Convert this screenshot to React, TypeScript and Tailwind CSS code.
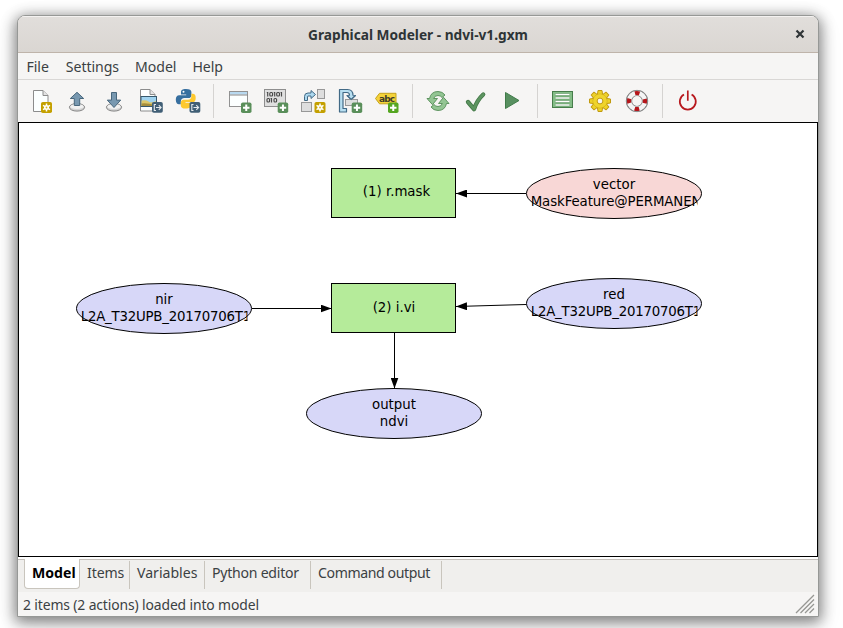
import type { ReactNode } from "react";

const uiFont = "font-['Noto_Sans',sans-serif]";

type BadgeProps = { x: number; y: number };

function PlusBadge({ x, y, color = "#5a8f5a" }: BadgeProps & { color?: string }) {
  return (
    <g transform={`translate(${x} ${y})`}>
      <rect width="10.5" height="10.5" rx="1.8" fill={color} />
      <path d="M5.25 2v6.5M2 5.25h6.5" stroke="#fff" strokeWidth="2" />
    </g>
  );
}

function StarBadge({ x, y }: BadgeProps) {
  return (
    <g transform={`translate(${x} ${y})`}>
      <rect width="11" height="11" rx="1.8" fill="#c4a000" />
      <path d="M5.5 1.5v8M2 3.4l7 4.2M9 3.4l-7 4.2" stroke="#fff" strokeWidth="1.5" />
      <circle cx="5.5" cy="5.5" r="2.5" fill="#fff" />
      <circle cx="5.5" cy="5.5" r="0.9" fill="#d9b928" />
    </g>
  );
}

function ExportBadge({ x, y }: BadgeProps) {
  return (
    <g transform={`translate(${x} ${y})`}>
      <rect width="10.8" height="10.8" rx="1.8" fill="#415f76" />
      <path d="M4 2.5H2.3v6H4M4 5.5h5M6.8 3.2l2.3 2.3-2.3 2.3" stroke="#e4eaee" strokeWidth="1.1" fill="none" />
    </g>
  );
}

function Disc({ cx }: { cx: number }) {
  return (
    <g>
      <ellipse cx={cx} cy="107.3" rx="7.6" ry="3.8" fill="#d4d4d4" stroke="#858585" />
      <ellipse cx={cx} cy="106.4" rx="6.6" ry="2.5" fill="#f1f1f1" />
    </g>
  );
}

function Tool({ x, label, children }: { x: number; label: string; children: ReactNode }) {
  return (
    <button type="button" aria-label={label} className="h-[42px] w-[37px] shrink-0">
      <svg className="block overflow-visible" width="37" height="42" viewBox={`${x} 80 37 42`} fill="none">
        {children}
      </svg>
    </button>
  );
}

function Separator({ className }: { className: string }) {
  return <div className={`h-[34px] w-px shrink-0 bg-[#d5d3d1] ${className}`} />;
}

const gearTeeth = [0, 45, 90, 135, 180, 225, 270, 315];

function Toolbar() {
  return (
    <div className="flex h-[42px] items-center pl-[5px]">
      <Tool x={23} label="New">
        <path d="M33.5 90.5H43l5 5v16H33.5z" fill="#fcffff" stroke="#8c8c8c" />
        <path d="M43 90.5v5h5" fill="#e4e4e4" stroke="#8c8c8c" />
        <StarBadge x={41} y={102} />
      </Tool>
      <Tool x={60} label="Open">
        <Disc cx={77} />
        <path d="M77 92.3l6.7 6.2h-4v7h-5.4v-7h-4z" fill="#7898b0" stroke="#48677d" />
      </Tool>
      <Tool x={97} label="Save">
        <Disc cx={114} />
        <path d="M111.5 92.5h5v7.6h4.2L114 107.5l-6.7-7.4h4.2z" fill="#7898b0" stroke="#48677d" />
      </Tool>
      <Tool x={134} label="Export image">
        <path d="M140.5 89.5H150l5 5V111h-14.5z" fill="#fcffff" stroke="#8c8c8c" />
        <path d="M150 89.5v5h5" fill="#e4e4e4" stroke="#8c8c8c" />
        <rect x="141" y="96.5" width="15.5" height="10" fill="#9fd3f0" stroke="#36586d" />
        <path d="M141.5 100.5q4.5-1 7 1t7.5-.5v5h-14.5z" fill="#dcc76a" />
        <path d="M141.5 103.5q5-1 14.5 2v.5h-14.5z" fill="#a58e3d" />
        <ExportBadge x={152} y={102} />
      </Tool>
      <Tool x={171} label="Export Python">
        <path d="M186 89c-4 0-5 1.4-5 3.1v2.3h5.2v.9h-7c-2.2 0-3.4 1.8-3.4 4.4 0 2.7 1.1 4.5 3.2 4.5h1.8v-2.7c0-2 1.6-3.4 3.5-3.4h4.2c1.7 0 2.9-1.3 2.9-2.9v-3.1c0-2-1.7-3.1-5.4-3.1z" fill="#376f9f" />
        <path d="M185.7 108.5c4 0 5-1.4 5-3.1v-2.3h-5.2v-.9h7c2.2 0 3.2-1.7 3.2-4.3 0-2.7-1-4.1-3-4.1h-1.3v2.6c0 2-1.6 3.3-3.5 3.3h-4.2c-1.6 0-2.9 1.2-2.9 2.9v2.8c0 2 1.5 3.1 4.9 3.1z" fill="#fec92f" />
        <circle cx="183.5" cy="91.7" r="1" fill="#fff" />
        <ExportBadge x={189.5} y={102} />
      </Tool>
      <Separator className="ml-[5px] mr-[7px]" />
      <Tool x={221} label="Add command">
        <rect x="229.5" y="91.5" width="18" height="15" fill="#fcffff" stroke="#929292" />
        <path d="M230 93.3h17" stroke="#b8d9f0" strokeWidth="2.6" />
        <path d="M229.5 95h18" stroke="#858585" />
        <PlusBadge x={241} y={102.5} />
      </Tool>
      <Tool x={258} label="Add data">
        <rect x="264.5" y="89.5" width="21" height="17" fill="#dfdfdf" stroke="#8e8e8e" />
        <g stroke="#4a4a4a" strokeWidth="1.15">
          <path d="M267.7 92v4.5M274.7 92v4.5M281.5 92v4.5M271.5 98v4.5M266.8 92.5h1M273.8 92.5h1M280.6 92.5h1M270.6 98.5h1" />
          <rect x="269.8" y="92.5" width="2.8" height="3.5" rx="1" />
          <rect x="276.7" y="92.5" width="2.8" height="3.5" rx="1" />
          <rect x="267" y="98.5" width="2.6" height="3.5" rx="1" />
          <rect x="274" y="98.5" width="2.6" height="3.5" rx="1" />
        </g>
        <PlusBadge x={277.7} y={102.5} />
      </Tool>
      <Tool x={295} label="Add relation">
        <rect x="301.5" y="102.5" width="10" height="9" fill="#dedede" stroke="#989898" />
        <rect x="317.5" y="89.5" width="7" height="9" fill="#dedede" stroke="#989898" />
        <path d="M304.5 100.5v-4q0-3.500 3.500-3.500h3v-2.500l4.500 4-4.500 4V96h-3q-.5 0-.5 1v3.500z" fill="#add9f0" stroke="#426a86" strokeLinejoin="round" />
        <StarBadge x={314.5} y={102} />
      </Tool>
      <Tool x={332} label="Add loop">
        <path d="M339.5 89.5h8q5.500 0 5.500 6h2.500l-4.300 4-4.200-4h2.500q0-3-2.500-3h-4v16h3.500v3.500h-7z" fill="#b8dff1" stroke="#426a86" strokeWidth="1.2" strokeLinejoin="round" />
        <rect x="345.5" y="99.5" width="12" height="6" fill="#dedede" stroke="#989898" />
        <path d="M347.500 95.700l3.700 3.800 3.800-3.800" fill="#b8dff1" stroke="#426a86" strokeWidth="1.2" />
        <PlusBadge x={351.7} y={102.5} />
      </Tool>
      <Tool x={369} label="Add label">
        <path d="M375.5 98.5l4-5.2H396v10.500h-16.500z" fill="#f4d33a" stroke="#c5a21a" />
        <text x="379" y="102" className="font-['DejaVu_Sans'] text-[9px] font-bold" fill="#403c28" textLength="16">abc</text>
        <PlusBadge x={388} y={102.5} color="#55a621" />
      </Tool>
      <Separator className="ml-[6px] mr-[7px]" />
      <Tool x={420} label="Redraw">
        <g stroke="#548c56" strokeWidth=".9" strokeLinejoin="round" fill="#93c593">
          <path d="M427 98.5h2.5q1.500-7 8.500-7 4.500 0 7 3.500l-3 2.500q-1.500-2-4-2-3.500 0-4.300 3h3.800l-5 6.200z" />
          <path d="M427 98.5h2.5q1.500-7 8.500-7 4.500 0 7 3.500l-3 2.500q-1.500-2-4-2-3.500 0-4.300 3h3.800l-5 6.200z" transform="rotate(180 438 101)" />
        </g>
      </Tool>
      <Tool x={457} label="Validate">
        <path d="M468 102l6 7.2q3-9 9.2-14.7" stroke="#437847" strokeWidth="4.3" strokeLinecap="round" strokeLinejoin="round" />
        <path d="M468 102l6 7.2q3-9 9.2-14.7" stroke="#5d9460" strokeWidth="2.7" strokeLinecap="round" strokeLinejoin="round" />
      </Tool>
      <Tool x={494} label="Run">
        <path d="M505.5 92.5L519 100.5l-13.5 8z" fill="#589060" stroke="#407b49" strokeLinejoin="round" />
      </Tool>
      <Separator className="ml-[6px] mr-[6px]" />
      <Tool x={544} label="Variables">
        <rect x="552.5" y="91.5" width="20" height="16" fill="#83bd86" stroke="#477d4b" />
        <path d="M555.5 94.5h14M555.5 98h14M555.5 101.5h14M555.5 105h14" stroke="#568b59" strokeWidth="2.5" />
        <path d="M555.5 94.5h14M555.5 98h14M555.5 101.5h14M555.5 105h14" stroke="#fff" strokeWidth="1.3" />
      </Tool>
      <Tool x={581} label="Preferences">
        {gearTeeth.map((angle) => (
          <path key={angle} d="M598 90.5h4l.7 5h-5.400z" fill="#eed229" stroke="#c19a10" strokeLinejoin="round" transform={`rotate(${angle} 600 101)`} />
        ))}
        <circle cx="600" cy="101" r="7" fill="#eed229" stroke="#c19a10" strokeWidth=".6" />
        <circle cx="600" cy="101" r="6.8" fill="#efd42c" />
        <circle cx="600" cy="101" r="2.9" fill="#f6f5f4" stroke="#c19a10" />
      </Tool>
      <Tool x={618} label="Help">
        <circle cx="637" cy="101" r="8" stroke="#808080" strokeWidth="6.2" />
        <circle cx="637" cy="101" r="8" stroke="#f4f4f4" strokeWidth="4.5" />
        <circle cx="637" cy="101" r="8" stroke="#b5161b" strokeWidth="4.2" strokeDasharray="4.6 7.966" strokeDashoffset="2.3" />
        <circle cx="637" cy="101" r="10.7" stroke="#8c8c8c" strokeWidth=".8" />
      </Tool>
      <Separator className="ml-[7px] mr-[6px]" />
      <Tool x={669} label="Quit">
        <path d="M684 94.5a8 8 0 1 0 7.6 0M687.8 90.5v10.3" stroke="#b8191e" strokeWidth="1.7" />
      </Tool>
    </div>
  );
}

type DataNode = { cx: number; cy: number; fill: string; top: string; bottom: string; clipped?: string };

const dataNodes: DataNode[] = [
  { cx: 614, cy: 193.5, fill: "#f8d7d6", top: "vector", bottom: "MaskFeature@PERMANENT", clipped: "tracking-[-0.1px]" },
  { cx: 164, cy: 308.5, fill: "#d7d7f8", top: "nir", bottom: "L2A_T32UPB_20170706T10", clipped: "tracking-[-0.22px]" },
  { cx: 614, cy: 303.5, fill: "#d7d7f8", top: "red", bottom: "L2A_T32UPB_20170706T10", clipped: "tracking-[-0.22px]" },
  { cx: 394, cy: 413.5, fill: "#d7d7f8", top: "output", bottom: "ndvi" },
];

function Diagram() {
  return (
    <svg className="block font-['DejaVu_Sans',sans-serif] text-[13.333px]" width="798" height="433" viewBox="19 123 798 433">
      <defs>
        <marker id="head" markerWidth="12" markerHeight="8" refX="11" refY="4" orient="auto" markerUnits="userSpaceOnUse">
          <path d="M0 0l11 4-11 4z" fill="#000" />
        </marker>
      </defs>
      <g stroke="#000">
        <path d="M526 193.5H456" markerEnd="url(#head)" />
        <path d="M252 308.5H331.5" markerEnd="url(#head)" />
        <path d="M526 304.5L456 306.5" markerEnd="url(#head)" />
        <path d="M394.5 333V388.5" markerEnd="url(#head)" />
      </g>
      <rect x="331.5" y="168.5" width="124" height="49" fill="#b5eb9a" stroke="#000" />
      <rect x="331.5" y="283.5" width="124" height="49" fill="#b5eb9a" stroke="#000" />
      <text x="396.5" y="196" textAnchor="middle">(1) r.mask</text>
      <text x="394" y="312" textAnchor="middle">(2) i.vi</text>
      {dataNodes.map((n) => (
        <g key={n.top}>
          <ellipse cx={n.cx} cy={n.cy} rx="87.5" ry="25" fill={n.fill} stroke="#000" />
          <text x={n.cx} y={n.cy - 4.5} textAnchor="middle">{n.top}</text>
          {n.clipped ? (
            <svg x={n.cx - 82.5} y={n.cy - 1} width="166" height="22">
              <text x="-0.8" y="13.5" className={n.clipped}>{n.bottom}</text>
            </svg>
          ) : (
            <text x={n.cx} y={n.cy + 12.5} textAnchor="middle">{n.bottom}</text>
          )}
        </g>
      ))}
    </svg>
  );
}

const tabs = [
  { label: "Items", className: "w-[50px] pl-[7px] tracking-[-0.1px]" },
  { label: "Variables", className: "w-[75px] pl-[7px]" },
  { label: "Python editor", className: "w-[106px] pl-[7px] tracking-[-0.25px]" },
  { label: "Command output", className: "w-[131px] pl-[7px] tracking-[-0.4px]" },
];

export default function App() {
  return (
    <main className={`h-[628px] w-[843px] overflow-hidden bg-white pl-[17px] pt-[15px] text-[14.1px] text-[#3b4143] ${uiFont}`}>
      <div className="flex h-[602px] w-[802px] flex-col overflow-hidden rounded-t-[8px] border border-[#969896] bg-[#f6f5f4] shadow-[0_3px_14px_2px_rgba(0,0,0,0.45),0_7px_25px_rgba(0,0,0,0.12)]">
        <header className="relative flex h-[37px] shrink-0 items-center justify-center border-b border-[#bfb4aa] bg-linear-to-b from-[#e1dedb] to-[#dad6d2] shadow-[inset_0_1px_#f4f2f1]">
          <h1 className="whitespace-nowrap pt-0.5 text-[13.7px] font-bold text-[#2e3436]">Graphical Modeler - ndvi-v1.gxm</h1>
          <svg className="absolute right-[13px] top-[13px]" width="10" height="10" viewBox="0 0 10 10">
            <path d="M1.5 1.5l7 7m0-7l-7 7" stroke="#2e3436" strokeWidth="2.2" />
          </svg>
        </header>
        <nav className="flex h-[27px] shrink-0 items-center gap-4 border-b border-[#d9d7d5] pl-[8.5px] pt-px tracking-[-0.05px]">
          <span className="mr-px">File</span><span>Settings</span><span>Model</span><span>Help</span>
        </nav>
        <Toolbar />
        <section className="h-[435px] shrink-0 border border-black bg-white">
          <Diagram />
        </section>
        <div className="h-[2px] shrink-0 bg-white" />
        <div className="flex h-[33px] shrink-0 border-t border-[#c5c0bb] bg-[#f0efed] pl-[6px]">
          <div className="-mt-px h-[30px] w-[56px] rounded-b-[4px] border border-t-0 border-[#c9c5bd] bg-white pl-[7px] pt-[4px] leading-[20px] font-bold text-black">Model</div>
          {tabs.map((tab) => (
            <div key={tab.label} className={`mt-px h-[28px] whitespace-nowrap border-r border-[#c9c5bd] pt-[2px] leading-[20px] ${tab.className}`}>{tab.label}</div>
          ))}
        </div>
        <footer className="flex h-6 shrink-0 items-center justify-between pl-[5px] text-[13.9px] tracking-[-0.12px]">
          <span className="pt-0.5">2 items (2 actions) loaded into model</span>
          <svg className="mr-[3px]" width="20" height="20" viewBox="0 0 20 20">
            <path d="M1 19L19 1M5.5 19L19 5.5M10 19l9-9M14.500 19l4.500-4.500" stroke="#969793" strokeWidth="1.3" />
          </svg>
        </footer>
      </div>
    </main>
  );
}
